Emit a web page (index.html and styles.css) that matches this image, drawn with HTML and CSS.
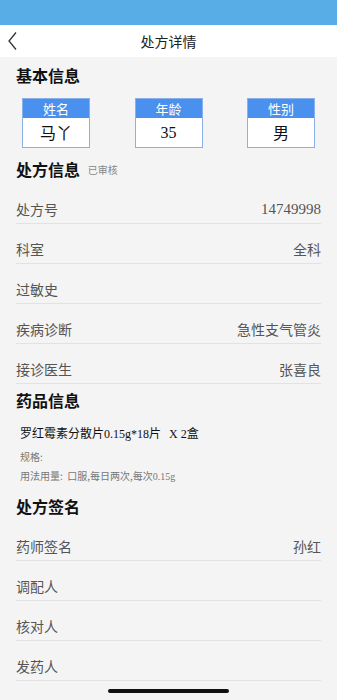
FILE: index.html
```html
<!DOCTYPE html>
<html lang="zh">
<head>
    <meta charset="UTF-8">
    <meta name="viewport" content="width=device-width, initial-scale=1.0">
    <title>处方详情</title>
    <link rel="stylesheet" href="styles.css">
</head>
<body>
    <div class="status-bar"></div>
    <div class="nav-bar">
        <svg class="back" width="12" height="20" viewBox="0 0 12 20">
            <polyline points="9,1.5 2,10 9,18.5" fill="none" stroke="#333" stroke-width="1.3"/>
        </svg>
        <div class="nav-title">处方详情</div>
    </div>

    <div class="page">
        <h2 class="section-title">基本信息</h2>
        <div class="basic-boxes">
            <div class="info-box">
                <div class="box-head">姓名</div>
                <div class="box-body">马丫</div>
            </div>
            <div class="info-box">
                <div class="box-head">年龄</div>
                <div class="box-body num">35</div>
            </div>
            <div class="info-box">
                <div class="box-head">性别</div>
                <div class="box-body">男</div>
            </div>
        </div>

        <h2 class="section-title second">处方信息 <span class="status">已审核</span></h2>
        <div class="row"><span>处方号</span><span class="num">14749998</span></div>
        <div class="row"><span>科室</span><span>全科</span></div>
        <div class="row"><span>过敏史</span><span></span></div>
        <div class="row"><span>疾病诊断</span><span>急性支气管炎</span></div>
        <div class="row"><span>接诊医生</span><span>张喜良</span></div>

        <h2 class="section-title drug-title">药品信息</h2>
        <div class="drug">
            <div class="drug-name">罗红霉素分散片<span class="num">0.15g*18</span>片 &nbsp; <span class="num">X 2</span>盒</div>
            <div class="drug-line spec">规格:</div>
            <div class="drug-line">用法用量: &nbsp;口服,每日两次,每次<span class="num">0.15g</span></div>
        </div>

        <h2 class="section-title sign-title">处方签名</h2>
        <div class="row"><span>药师签名</span><span>孙红</span></div>
        <div class="row"><span>调配人</span><span></span></div>
        <div class="row"><span>核对人</span><span></span></div>
        <div class="row"><span>发药人</span><span></span></div>
    </div>

    <div class="home-bar"></div>
</body>
</html>
```

FILE: styles.css
```css
body {
    margin: 0;
    background: #f4f4f4;
    font-family: "Noto Sans CJK SC", "Noto Sans", sans-serif;
    color: #222;
}

.status-bar {
    height: 25px;
    background: #58ade6;
}

.nav-bar {
    height: 32px;
    background: white;
    display: flex;
    align-items: center;
    justify-content: center;
    position: relative;
}

.back {
    position: absolute;
    left: 7px;
    top: 6px;
}

.nav-title {
    font-size: 14px;
    color: #222;
}

.page {
    padding: 8px 16px 0;
}

.section-title {
    margin: 0;
    font-size: 16px;
    line-height: 20px;
    font-weight: bold;
    color: #111;
}

.section-title.second {
    margin-top: 11px;
    margin-bottom: 4px;
}

.status {
    font-size: 10px;
    font-weight: normal;
    color: #888;
    margin-left: 4px;
    vertical-align: 2px;
}

.basic-boxes {
    display: flex;
    justify-content: space-between;
    padding: 0 6px;
    margin-top: 13px;
}

.info-box {
    width: 68px;
    border: 1px solid #8ab0e6;
    box-sizing: border-box;
    background: white;
}

.box-head {
    background: #4a90ee;
    color: white;
    text-align: center;
    font-size: 13px;
    line-height: 19px;
}

.box-body {
    text-align: center;
    font-size: 16px;
    line-height: 29px;
    color: #111;
}

.num {
    font-family: "Liberation Serif", "Noto Sans CJK SC", serif;
}

.row {
    display: flex;
    justify-content: space-between;
    align-items: center;
    height: 20px;
    padding: 15px 0 4px;
    font-size: 14px;
    color: #555;
    border-bottom: 1px solid #e2e2e2;
}

.row span {
    line-height: 20px;
}

.row .num {
    font-size: 15px;
}

.drug-title {
    margin-top: 6px;
}

.drug {
    padding-left: 4px;
}

.drug-name {
    margin-top: 15px;
    font-size: 12px;
    line-height: 16px;
    color: #111;
}

.drug-line {
    font-size: 10px;
    line-height: 19px;
    color: #777;
}

.drug-line.spec {
    margin-top: 5px;
}

.sign-title {
    margin-top: 10px;
    margin-bottom: 5px;
}

.home-bar {
    position: fixed;
    left: 108px;
    bottom: 7px;
    width: 121px;
    height: 4px;
    border-radius: 2px;
    background: #111;
}
```
